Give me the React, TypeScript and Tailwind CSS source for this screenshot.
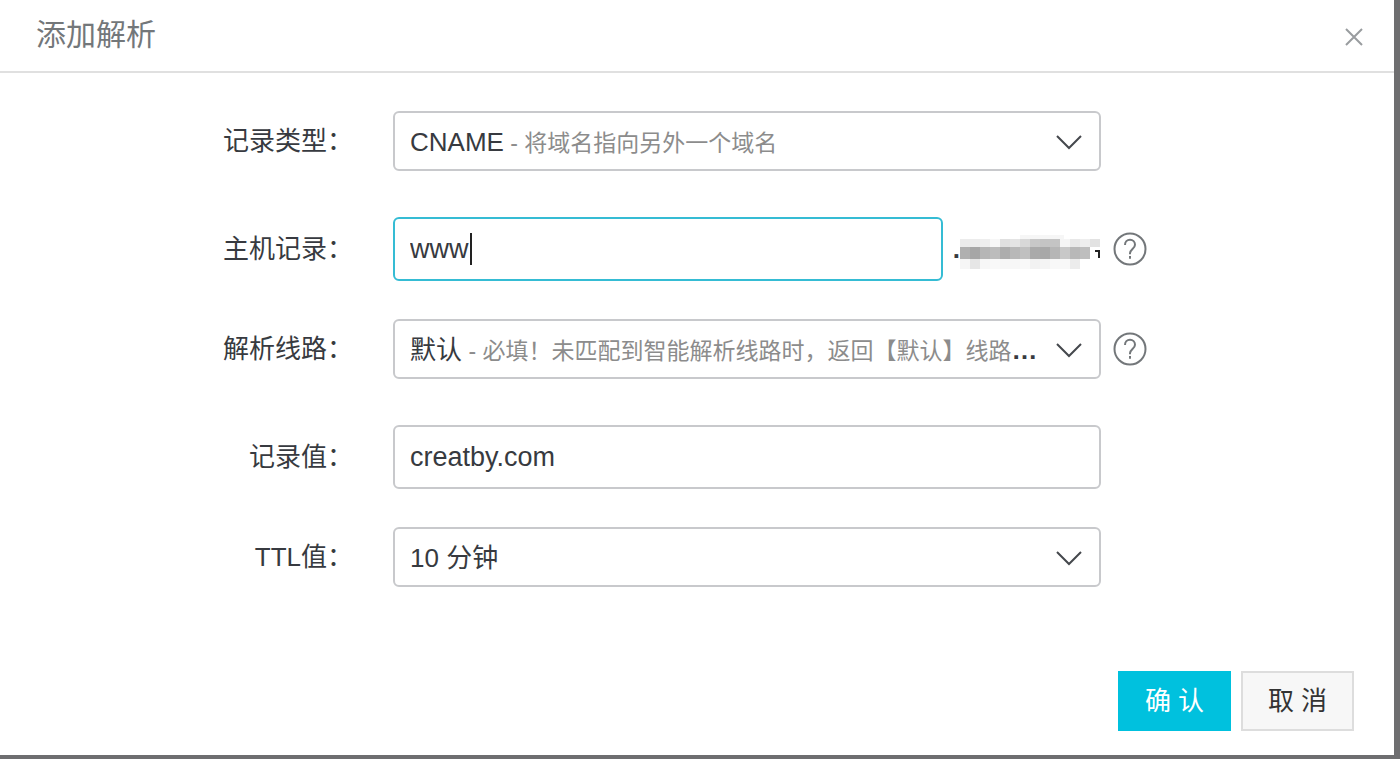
import { type ReactNode, useState } from 'react';

const LINE_HINT = '必填！未匹配到智能解析线路时，返回【默认】线路';

// column, row, shade
const MASK: [number, number, string][] = [
  [0, 0, '#ececec'], [1, 0, '#ececec'], [2, 0, '#eeeeee'], [3, 0, '#f7f7f7'], [4, 0, '#e0e0e0'], [5, 0, '#e4e4e4'], [6, 0, '#d8d8d8'],
  [7, 0, '#c8c8c8'], [8, 0, '#c4c4c4'], [9, 0, '#c4c4c4'], [10, 0, '#f5f5f5'], [11, 0, '#e8e8e8'], [12, 0, '#eeeeee'], [13, 0, '#e2e2e2'],
  [0, 1, '#b0b0b0'], [1, 1, '#a6a6a6'], [2, 1, '#b6b6b6'], [3, 1, '#bcbcbc'], [4, 1, '#adadad'], [5, 1, '#b8b8b8'], [6, 1, '#c0c0c0'],
  [7, 1, '#aaaaaa'], [8, 1, '#a8a8a8'], [9, 1, '#b6b6b6'], [10, 1, '#c8c8c8'], [11, 1, '#b8b8b8'], [12, 1, '#bebebe'],
  [0, 2, '#f6f6f6'], [1, 2, '#e6e6e6'], [2, 2, '#f7f7f7'], [3, 2, '#f9f9f9'], [4, 2, '#f7f7f7'], [5, 2, '#f7f7f7'], [6, 2, '#f9f9f9'],
  [7, 2, '#f2f2f2'], [8, 2, '#f4f4f4'], [9, 2, '#f8f8f8'], [10, 2, '#f8f8f8'], [11, 2, '#ececec'],
];

function Chevron() {
  return (
    <svg className="pointer-events-none mr-4 h-8 w-8 self-center justify-self-end [grid-area:1/1]" viewBox="0 0 32 32" fill="none" stroke="#45484d" strokeWidth="2">
      <path d="M4 11l12 12 12-12" />
    </svg>
  );
}

function Help({ label }: { label: string }) {
  return (
    <button type="button" aria-label={label} className="ml-3 text-[#73777a]">
      <svg className="h-[34px] w-[34px]" viewBox="0 0 34 34" fill="none" stroke="currentColor" strokeWidth="2">
        <circle cx="17" cy="17" r="15.5" />
        <path d="M12 13c0-3 2.100-5.200 5-5.200s5 2.200 5 4.900c0 4-5 4.600-5 8.600v1" />
        <path d="M17 24v2.800" />
      </svg>
    </button>
  );
}

function Row({ id, label, help, tall, children }: { id: string; label: string; help?: string; tall?: boolean; children: ReactNode }) {
  return (
    <div className={`grid grid-cols-[353px_1fr_253px] items-center gap-x-10 ${tall ? 'h-16' : 'h-[60px]'}`}>
      <label htmlFor={id} className="text-right">
        {label}
      </label>
      <div className="flex min-w-0 items-center">{children}</div>
      <div className="-ml-10 flex">{help && <Help label={help} />}</div>
    </div>
  );
}

function Select({ id, value, hint, more }: { id: string; value: string; hint?: string; more?: boolean }) {
  return (
    <div className="grid h-[60px] w-full grid-cols-1">
      <select
        id={id}
        className="w-full appearance-none rounded-md border-2 border-[#c8c9cc] bg-white px-4 text-transparent outline-none [grid-area:1/1]"
      >
        <option>{value}</option>
      </select>
      <span className="pointer-events-none mr-[60px] ml-[17px] self-center truncate pt-0.5 [grid-area:1/1]">
        {value}
        {hint && <span className="text-[23px] text-[#8c8c8c]"> - {hint}</span>}
        {more && <span className="font-bold">…</span>}
      </span>
      <Chevron />
    </div>
  );
}

export default function App() {
  const [host, setHost] = useState('www');
  const [record, setRecord] = useState('creatby.com');

  return (
    <div className="flex min-h-screen bg-[#6e6e70] pr-1.5 pb-1 font-['Liberation_Sans','Noto_Sans_CJK_SC',sans-serif] text-[26px] leading-9 text-[#373a40]">
      <form className="flex flex-1 flex-col bg-white" onSubmit={(e) => e.preventDefault()}>
        <header className="flex h-[73px] items-center justify-between border-b-2 border-[#e0e0e0] pr-7 pl-9">
          <h1 className="pb-0.5 text-[30px] text-[#73777a]">添加解析</h1>
          <button type="button" aria-label="关闭" className="pt-0.5 text-[#999c9f]">
            <svg className="h-6 w-6" viewBox="0 0 24 24" fill="none" stroke="currentColor" strokeWidth="2">
              <path d="M4 4l16 16M20 4L4 20" />
            </svg>
          </button>
        </header>

        <div className="flex flex-1 flex-col pt-[38px]">
          <div className="flex flex-col gap-[46px]">
            <Row id="type" label="记录类型：">
              <Select id="type" value="CNAME" hint="将域名指向另外一个域名" />
            </Row>
            <Row id="host" label="主机记录：" help="主机记录说明" tall>
              <div className="relative flex-1">
                <input
                  id="host"
                  value={host}
                  onChange={(e) => setHost(e.target.value)}
                  className="h-16 w-full rounded-md border-2 border-[#35bcd4] px-[15px] text-[27px] outline-none"
                />
                <span className="absolute top-4 left-[77px] h-8 w-0.5 bg-[#222222]" />
              </div>
              <span className="ml-2.5 font-bold">.</span>
              <svg className="h-10 w-[141px]" viewBox="0 0 141 40" shapeRendering="crispEdges">
                {MASK.map(([x, y, fill]) => (
                  <rect key={`${x}-${y}`} x={x * 10} y={[10, 18, 30][y]} width="10" height={[8, 12, 10][y]} fill={fill} />
                ))}
                <rect x="60" y="6" width="44" height="4" fill="#f6f6f6" />
                <path d="M135 22h4v7" fill="none" stroke="#222222" strokeWidth="2" />
              </svg>
            </Row>
          </div>
          <div className="mt-[38px] flex flex-col gap-[46px]">
            <Row id="line" label="解析线路：" help="解析线路说明">
              <Select id="line" value="默认" hint={LINE_HINT} more />
            </Row>
            <Row id="record" label="记录值：" tall>
              <input
                id="record"
                value={record}
                onChange={(e) => setRecord(e.target.value)}
                className="h-16 w-full rounded-md border-2 border-[#c8c9cc] px-[15px] text-[27px] outline-none"
              />
            </Row>
          </div>
          <div className="mt-[38px]">
            <Row id="ttl" label="TTL值：">
              <Select id="ttl" value="10 分钟" />
            </Row>
          </div>
        </div>

        <footer className="flex justify-end gap-2.5 pr-10 pb-6">
          <button type="submit" className="h-[60px] w-[113px] bg-[#00c1de] text-white">
            确 认
          </button>
          <button type="button" className="h-[60px] w-[113px] border-2 border-[#dddddd] bg-[#f7f7f7] text-[#333333]">
            取 消
          </button>
        </footer>
      </form>
    </div>
  );
}
